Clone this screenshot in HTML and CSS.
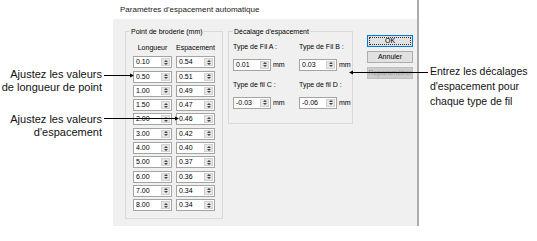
FILE: index.html
```html
<!DOCTYPE html>
<html lang="fr">
<head>
    <meta charset="UTF-8">
    <title>Paramètres d'espacement automatique</title>
    <link rel="stylesheet" href="styles.css">
</head>
<body>
    <div class="page">
        <!-- Callouts on the left -->
        <div class="notes-left">
            <p class="note note-length">Ajustez les valeurs<br>de longueur de point</p>
            <p class="note note-spacing">Ajustez les valeurs<br>d'espacement</p>
        </div>

        <div class="dialog">
            <div class="titlebar">Paramètres d'espacement automatique</div>
            <div class="dialog-body">
                <fieldset class="group group-stitch">
                    <legend>Point de broderie (mm)</legend>
                    <div class="stitch-grid">
                        <span class="col-head">Longueur</span>
                        <span class="col-head">Espacement</span>

                        <div class="spin"><span class="spin-value">0.10</span><span class="spin-btns"><i class="up"></i><i class="down"></i></span></div>
                        <div class="spin"><span class="spin-value">0.54</span><span class="spin-btns"><i class="up"></i><i class="down"></i></span></div>

                        <div class="spin"><span class="spin-value">0.50</span><span class="spin-btns"><i class="up"></i><i class="down"></i></span></div>
                        <div class="spin"><span class="spin-value">0.51</span><span class="spin-btns"><i class="up"></i><i class="down"></i></span></div>

                        <div class="spin"><span class="spin-value">1.00</span><span class="spin-btns"><i class="up"></i><i class="down"></i></span></div>
                        <div class="spin"><span class="spin-value">0.49</span><span class="spin-btns"><i class="up"></i><i class="down"></i></span></div>

                        <div class="spin"><span class="spin-value">1.50</span><span class="spin-btns"><i class="up"></i><i class="down"></i></span></div>
                        <div class="spin"><span class="spin-value">0.47</span><span class="spin-btns"><i class="up"></i><i class="down"></i></span></div>

                        <div class="spin"><span class="spin-value">2.00</span><span class="spin-btns"><i class="up"></i><i class="down"></i></span></div>
                        <div class="spin"><span class="spin-value">0.46</span><span class="spin-btns"><i class="up"></i><i class="down"></i></span></div>

                        <div class="spin"><span class="spin-value">3.00</span><span class="spin-btns"><i class="up"></i><i class="down"></i></span></div>
                        <div class="spin"><span class="spin-value">0.42</span><span class="spin-btns"><i class="up"></i><i class="down"></i></span></div>

                        <div class="spin"><span class="spin-value">4.00</span><span class="spin-btns"><i class="up"></i><i class="down"></i></span></div>
                        <div class="spin"><span class="spin-value">0.40</span><span class="spin-btns"><i class="up"></i><i class="down"></i></span></div>

                        <div class="spin"><span class="spin-value">5.00</span><span class="spin-btns"><i class="up"></i><i class="down"></i></span></div>
                        <div class="spin"><span class="spin-value">0.37</span><span class="spin-btns"><i class="up"></i><i class="down"></i></span></div>

                        <div class="spin"><span class="spin-value">6.00</span><span class="spin-btns"><i class="up"></i><i class="down"></i></span></div>
                        <div class="spin"><span class="spin-value">0.36</span><span class="spin-btns"><i class="up"></i><i class="down"></i></span></div>

                        <div class="spin"><span class="spin-value">7.00</span><span class="spin-btns"><i class="up"></i><i class="down"></i></span></div>
                        <div class="spin"><span class="spin-value">0.34</span><span class="spin-btns"><i class="up"></i><i class="down"></i></span></div>

                        <div class="spin"><span class="spin-value">8.00</span><span class="spin-btns"><i class="up"></i><i class="down"></i></span></div>
                        <div class="spin"><span class="spin-value">0.34</span><span class="spin-btns"><i class="up"></i><i class="down"></i></span></div>
                    </div>
                </fieldset>

                <fieldset class="group group-offset">
                    <legend>Décalage d'espacement</legend>
                    <div class="offset-grid">
                        <div class="field">
                            <label>Type de Fil A :</label>
                            <div class="field-row">
                                <div class="spin"><span class="spin-value">0.01</span><span class="spin-btns"><i class="up"></i><i class="down"></i></span></div>
                                <span class="unit">mm</span>
                            </div>
                        </div>
                        <div class="field">
                            <label>Type de Fil B :</label>
                            <div class="field-row">
                                <div class="spin"><span class="spin-value">0.03</span><span class="spin-btns"><i class="up"></i><i class="down"></i></span></div>
                                <span class="unit">mm</span>
                            </div>
                        </div>
                        <div class="field">
                            <label>Type de fil C :</label>
                            <div class="field-row">
                                <div class="spin"><span class="spin-value">-0.03</span><span class="spin-btns"><i class="up"></i><i class="down"></i></span></div>
                                <span class="unit">mm</span>
                            </div>
                        </div>
                        <div class="field">
                            <label>Type de fil D :</label>
                            <div class="field-row">
                                <div class="spin"><span class="spin-value">-0.06</span><span class="spin-btns"><i class="up"></i><i class="down"></i></span></div>
                                <span class="unit">mm</span>
                            </div>
                        </div>
                    </div>
                </fieldset>

                <div class="buttons">
                    <button class="btn btn-default">OK</button>
                    <button class="btn">Annuler</button>
                    <button class="btn" disabled>Reparamétrer</button>
                </div>
            </div>
        </div>

        <!-- Callout on the right -->
        <div class="notes-right">
            <p class="note">Entrez les décalages<br>d'espacement pour<br>chaque type de fil</p>
        </div>

        <!-- Leader lines drawn over the dialog -->
        <svg class="leaders" width="537" height="241" viewBox="0 0 537 241">
            <line x1="104" y1="75.5" x2="131" y2="75.5" stroke="#000" stroke-width="1"/>
            <polygon points="130,73.5 134,75.5 130,77.5" fill="#000"/>
            <line x1="104" y1="118.5" x2="176" y2="118.5" stroke="#000" stroke-width="1"/>
            <polygon points="175,116.5 179,118.5 175,120.5" fill="#000"/>
            <line x1="428" y1="72.5" x2="352" y2="72.5" stroke="#000" stroke-width="1"/>
            <polygon points="353,70.5 349,72.5 353,74.5" fill="#000"/>
        </svg>
    </div>
</body>
</html>
```

FILE: styles.css
```css
* {
    box-sizing: border-box;
}
body {
    margin: 0;
    background: #fff;
    font-family: "Liberation Sans", Arial, sans-serif;
    color: #000;
}
.page {
    position: relative;
    display: flex;
    width: 537px;
    height: 241px;
}

/* callout texts */
.note {
    margin: 0;
    font-size: 11px;
    line-height: 13px;
    color: #111;
}
.notes-left {
    width: 113px;
    padding-right: 11px;
    text-align: right;
}
.note-length {
    padding-top: 68px;
}
.note-spacing {
    margin-top: 19px;
}
.notes-right {
    padding: 64px 0 0 11px;
}
.notes-right .note {
    font-size: 10.5px;
    line-height: 15px;
}

/* dialog */
.dialog {
    width: 306px;
    height: 226px;
    border-right: 2px solid #ababab;
    display: flex;
    flex-direction: column;
}
.titlebar {
    height: 19px;
    padding: 5px 0 0 7px;
    font-size: 8px;
    line-height: 9px;
    color: #1a1a1a;
}
.dialog-body {
    flex: 1;
    background: #f0f0f0;
    display: flex;
    align-items: flex-start;
    padding: 8px 0 0 12px;
    font-size: 7px;
}
.group {
    margin: 0;
    min-width: 0;
    border: 1px solid #d9d9d9;
}
.group legend {
    padding: 0 1px;
    margin-left: -3px;
    line-height: 9px;
}
.group-stitch {
    width: 98px;
    padding: 7px 7px 7px;
}
.group-offset {
    width: 125px;
    margin-left: 5px;
    padding: 6px 4px 14px;
}
.group-offset legend {
    margin-left: 0;
}

.stitch-grid {
    display: grid;
    grid-template-columns: 39px 39px;
    column-gap: 4px;
    row-gap: 2.3px;
}
.col-head {
    text-align: center;
    line-height: 9px;
    margin-bottom: 2px;
}

/* spin box */
.spin {
    display: flex;
    width: 39px;
    height: 12px;
    border: 1px solid #a4a4a4;
    background: #fff;
}
.spin-value {
    flex: 1;
    padding-left: 2px;
    line-height: 10px;
    white-space: nowrap;
}
.spin-btns {
    width: 9px;
    margin: 1px 1px 1px 0;
    display: flex;
    flex-direction: column;
    background: #e6e6e6;
    border: 1px solid #d2d2d2;
}
.spin-btns i {
    flex: 1;
    display: flex;
    align-items: center;
    justify-content: center;
}
.spin-btns i::before {
    content: "";
    border-left: 2px solid transparent;
    border-right: 2px solid transparent;
}
.spin-btns .up::before {
    border-bottom: 2px solid #444;
}
.spin-btns .down::before {
    border-top: 2px solid #444;
}

.offset-grid {
    display: grid;
    grid-template-columns: 66px auto;
    row-gap: 9.5px;
}
.field label {
    display: block;
    line-height: 9px;
    margin-bottom: 7.5px;
}
.field-row {
    display: flex;
    align-items: center;
    gap: 2px;
}
.field-row .spin {
    width: 38px;
}
.unit {
    line-height: 9px;
}

/* buttons */
.buttons {
    display: flex;
    flex-direction: column;
    gap: 4px;
    width: 46px;
    margin: 8px 0 0 14px;
}
.btn {
    height: 12px;
    padding: 0;
    font-family: inherit;
    font-size: 7px;
    line-height: 10px;
    color: #000;
    background: #e1e1e1;
    border: 1px solid #adadad;
    border-radius: 0;
}
.btn-default {
    border-color: #0078d7;
    outline: 1px dotted #333;
    outline-offset: -3px;
}
.btn:disabled {
    color: #9a9a9a;
    background: #cccccc;
    border-color: #bfbfbf;
}

.leaders {
    position: absolute;
    left: 0;
    top: 0;
}
```
